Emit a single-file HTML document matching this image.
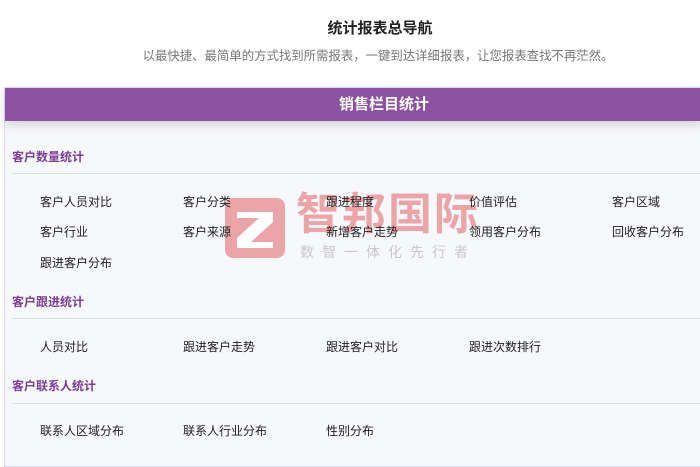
<!DOCTYPE html>
<html><head><meta charset="utf-8"><style>
*{margin:0;padding:0;box-sizing:border-box}
body{width:700px;height:457px;overflow:hidden;background:#fff;font-family:"Liberation Sans","Noto Sans CJK SC",sans-serif;position:relative}
.t{position:absolute;top:17px;left:0;width:760px;text-align:center;font-size:15px;font-weight:bold;color:#222}
.s{position:absolute;top:46px;left:0;width:756px;text-align:center;font-size:12.4px;color:#777}
.card{position:absolute;left:4px;top:87px;width:700px;height:380px;background:#f7f8fc;border:1px solid #dde}
.hd{height:33px;background:#8b52a1;color:#fff;font-size:15px;font-weight:bold;text-align:center;line-height:33px;padding-left:60px;box-shadow:0 4px 10px rgba(0,0,0,.15)}
.sec{position:absolute;left:12px;font-size:12px;font-weight:bold;color:#7b3d95}
.ln{position:absolute;left:12px;width:700px;height:1px;background:#dcdce4}
.i{position:absolute;font-size:12px;color:#222}
</style></head><body>
<div class="t">统计报表总导航</div>
<div class="s">以最快捷、最简单的方式找到所需报表，一键到达详细报表，让您报表查找不再茫然。</div>
<div class="card"><div class="hd">销售栏目统计</div></div>
<div class="sec" style="top:148px">客户数量统计</div><div class="ln" style="top:173px"></div>
<div class="sec" style="top:293px">客户跟进统计</div><div class="ln" style="top:318px"></div>
<div class="sec" style="top:377px">客户联系人统计</div><div class="ln" style="top:403px"></div>
<div style="position:absolute;left:225px;top:198px;width:60px;height:60px;background:#eba4a8;border-radius:8px"></div>
<svg style="position:absolute;left:225px;top:198px" width="60" height="60"><path d="M12 14H48V24L26 44H48V50H12V40L34 20H12Z" fill="#fff"/></svg>
<div style="position:absolute;left:296px;top:190px;font-size:44px;font-weight:bold;color:#eba4a8;letter-spacing:2px;line-height:50px">智邦国际</div>
<div style="position:absolute;left:300px;top:242px;font-size:14px;color:#c8c8c8;letter-spacing:8px">数智一体化先行者</div>
<div class="i" style="left:40px;top:193px">客户人员对比</div><div class="i" style="left:183px;top:193px">客户分类</div><div class="i" style="left:326px;top:193px">跟进程度</div><div class="i" style="left:469px;top:193px">价值评估</div><div class="i" style="left:612px;top:193px">客户区域</div>
<div class="i" style="left:40px;top:223px">客户行业</div><div class="i" style="left:183px;top:223px">客户来源</div><div class="i" style="left:326px;top:223px">新增客户走势</div><div class="i" style="left:469px;top:223px">领用客户分布</div><div class="i" style="left:612px;top:223px">回收客户分布</div>
<div class="i" style="left:40px;top:254px">跟进客户分布</div>
<div class="i" style="left:40px;top:338px">人员对比</div><div class="i" style="left:183px;top:338px">跟进客户走势</div><div class="i" style="left:326px;top:338px">跟进客户对比</div><div class="i" style="left:469px;top:338px">跟进次数排行</div>
<div class="i" style="left:40px;top:422px">联系人区域分布</div><div class="i" style="left:183px;top:422px">联系人行业分布</div><div class="i" style="left:326px;top:422px">性别分布</div>
</body></html>
